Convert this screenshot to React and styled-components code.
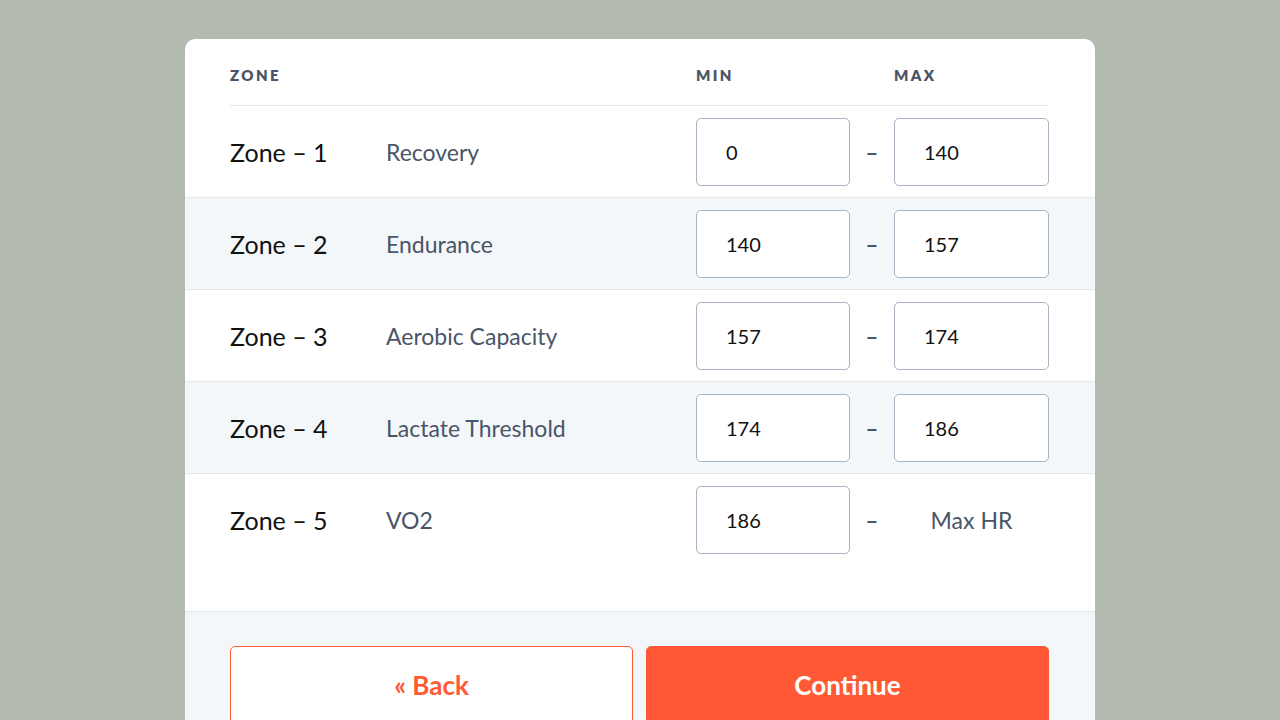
import React from "react";
import styled, { createGlobalStyle } from "styled-components";

const Global = createGlobalStyle`
  html, body { margin: 0; padding: 0; }
  body {
    background: #b3bbb0;
    font-family: Lato, "Noto Sans", "Liberation Sans", sans-serif;
    -webkit-font-smoothing: antialiased;
  }
`;

const Page = styled.div`
  min-height: 720px;
  padding-top: 39px;
  box-sizing: border-box;
`;

const Card = styled.div`
  width: 910px;
  margin: 0 auto;
  background: #ffffff;
  border-radius: 10px;
  overflow: hidden;
`;

const Grid = styled.div`
  display: grid;
  grid-template-columns: 156px 1fr 154px 44px 155px;
  align-items: center;
`;

const HeaderRow = styled(Grid)`
  margin: 0 46px 0 45px;
  padding: 27px 0 21px;
  border-bottom: 1px solid #e3e8ef;
`;

const HeadCell = styled.div`
  font-size: 15px;
  font-weight: 800;
  letter-spacing: 2.4px;
  color: #4a5568;
  grid-column: ${(p) => p.col};
`;

const Row = styled(Grid)`
  padding: 12px 46px 11px 45px;
  background: ${(p) => (p.shaded ? "#f4f7fa" : "#ffffff")};
  border-bottom: ${(p) => (p.last ? "none" : "1px solid #e3e8ef")};
`;

const ZoneLabel = styled.div`
  font-size: 25px;
  color: #111111;
`;

const Desc = styled.div`
  font-size: 23px;
  color: #4a5568;
`;

const Input = styled.input`
  box-sizing: border-box;
  width: 100%;
  height: 68px;
  border: 1px solid #a9b3c1;
  border-radius: 5px;
  background: #ffffff;
  padding: 0 0 0 29px;
  font-family: inherit;
  font-size: 20px;
  color: #111111;
  outline: none;
`;

const Dash = styled.div`
  text-align: center;
  font-size: 22px;
  font-weight: 700;
  color: #4a5568;
`;

const MaxText = styled.div`
  text-align: center;
  font-size: 23px;
  color: #4a5568;
`;

const Spacer = styled.div`
  height: 46px;
`;

const Footer = styled.div`
  background: #f4f7fa;
  border-top: 1px solid #e3e8ef;
  padding: 34px 46px 30px 45px;
  display: grid;
  grid-template-columns: 1fr 1fr;
  gap: 13px;
`;

const Button = styled.button`
  height: 78px;
  border-radius: 5px;
  font-family: inherit;
  font-size: 26px;
  font-weight: 700;
  padding: 0;
  cursor: pointer;
  border: 1px solid #ff5a35;
  background: ${(p) => (p.primary ? "#ff5a35" : "#ffffff")};
  color: ${(p) => (p.primary ? "#ffffff" : "#ff5a35")};
`;

const zones = [
  { n: 1, name: "Recovery", min: "0", max: "140" },
  { n: 2, name: "Endurance", min: "140", max: "157" },
  { n: 3, name: "Aerobic Capacity", min: "157", max: "174" },
  { n: 4, name: "Lactate Threshold", min: "174", max: "186" },
  { n: 5, name: "VO2", min: "186", max: null },
];

export default function App() {
  return (
    <Page>
      <Global />
      <Card>
        <HeaderRow>
          <HeadCell col="1">ZONE</HeadCell>
          <HeadCell col="3">MIN</HeadCell>
          <HeadCell col="5">MAX</HeadCell>
        </HeaderRow>
        {zones.map((z, i) => (
          <Row key={z.n} shaded={i % 2 === 1} last={i === zones.length - 1}>
            <ZoneLabel>Zone – {z.n}</ZoneLabel>
            <Desc>{z.name}</Desc>
            <Input defaultValue={z.min} />
            <Dash>–</Dash>
            {z.max ? <Input defaultValue={z.max} /> : <MaxText>Max HR</MaxText>}
          </Row>
        ))}
        <Spacer />
        <Footer>
          <Button>« Back</Button>
          <Button primary>Continue</Button>
        </Footer>
      </Card>
    </Page>
  );
}
